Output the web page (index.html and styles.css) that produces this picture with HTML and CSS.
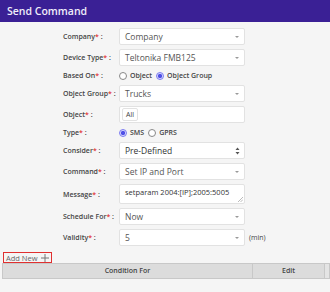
FILE: index.html
```html
<!DOCTYPE html>
<html lang="en">
<head>
  <meta charset="UTF-8">
  <meta name="viewport" content="width=device-width, initial-scale=1.0">
  <title>Send Command</title>
  <link rel="stylesheet" href="styles.css">
</head>
<body>
  <!-- Заголовок -->
  <div class="panel-header">Send Command</div>

  <!-- Форма команды -->
  <div class="command-form">
    <div class="form-label">Company<span class="req">*</span> :</div>
    <div class="field select"><span>Company</span><i class="caret"></i></div>
    <div></div>

    <div class="form-label">Device Type<span class="req">*</span> :</div>
    <div class="field select"><span>Teltonika FMB125</span><i class="caret"></i></div>
    <div></div>

    <div class="form-label short">Based On<span class="req">*</span> :</div>
    <div class="radio-row short">
      <span class="radio"></span><span class="radio-text">Object</span>
      <span class="radio checked"></span><span class="radio-text">Object Group</span>
    </div>
    <div></div>

    <div class="form-label">Object Group<span class="req">*</span> :</div>
    <div class="field select"><span>Trucks</span><i class="caret"></i></div>
    <div></div>

    <div class="form-label">Object<span class="req">*</span> :</div>
    <div class="field tags"><span class="tag">All</span></div>
    <div></div>

    <div class="form-label short">Type<span class="req">*</span> :</div>
    <div class="radio-row short">
      <span class="radio checked"></span><span class="radio-text">SMS</span>
      <span class="radio"></span><span class="radio-text">GPRS</span>
    </div>
    <div></div>

    <div class="form-label">Consider<span class="req">*</span> :</div>
    <div class="field select dark">
      <span>Pre-Defined</span>
      <svg class="updown" width="5" height="8" viewBox="0 0 5 8"><path d="M2.5 0.5 L4.5 3 L0.5 3 Z M2.5 7.5 L4.5 5 L0.5 5 Z" fill="#555"/></svg>
    </div>
    <div></div>

    <div class="form-label">Command<span class="req">*</span> :</div>
    <div class="field select"><span>Set IP and Port</span><i class="caret"></i></div>
    <div></div>

    <div class="form-label tall">Message<span class="req">*</span> :</div>
    <div class="field textarea">
      <span>setparam 2004:[IP];2005:5005</span>
      <svg class="grip" width="5" height="5" viewBox="0 0 5 5"><path d="M0 5 L5 0 M2.5 5 L5 2.5" stroke="#aaa" stroke-width="0.8"/></svg>
    </div>
    <div></div>

    <div class="form-label">Schedule For<span class="req">*</span> :</div>
    <div class="field select"><span>Now</span><i class="caret"></i></div>
    <div></div>

    <div class="form-label">Validity<span class="req">*</span> :</div>
    <div class="field select"><span>5</span><i class="caret"></i></div>
    <div class="unit">(min)</div>
  </div>

  <!-- Условия -->
  <div class="add-new">
    <span>Add New</span>
    <svg class="plus" width="8" height="8" viewBox="0 0 8 8"><path d="M4 0 V8 M0 4 H8" stroke="#777" stroke-width="1"/></svg>
  </div>
  <div class="cond-table">
    <div class="cond-head main">Condition For</div>
    <div class="cond-head edit">Edit</div>
    <div class="cond-head tail"></div>
  </div>
</body>
</html>
```

FILE: styles.css
```css
/* Общие стили */
* {
  margin: 0;
  padding: 0;
  box-sizing: border-box;
}
body {
  font-family: "Open Sans", Arial, sans-serif;
  background-color: #f5f5f5;
  color: #555;
  width: 330px;
  height: 292px;
  overflow: hidden;
}
/* Заголовок панели */
.panel-header {
  height: 22px;
  background-color: #3a2095;
  color: #f0eefa;
  font-size: 10.5px;
  font-weight: 600;
  line-height: 23px;
  padding-left: 7px;
}
/* Форма */
.command-form {
  display: grid;
  grid-template-columns: 56px 126px 40px;
  row-gap: 4px;
  padding: 6px 0 0 63px;
  align-items: center;
}
.form-label {
  font-size: 7px;
  font-weight: 600;
  color: #444;
  white-space: nowrap;
}
.req {
  color: #e23a3a;
}
.field {
  height: 17px;
  background-color: #fff;
  border: 1px solid #e2e2e2;
  border-radius: 2px;
  display: flex;
  align-items: center;
  padding-left: 5px;
  font-size: 8.5px;
  color: #555;
  position: relative;
}
.field.dark {
  color: #333;
}
.caret {
  position: absolute;
  right: 5px;
  top: 7px;
  width: 0;
  height: 0;
  border-left: 2px solid transparent;
  border-right: 2px solid transparent;
  border-top: 2px solid #999;
}
.updown {
  position: absolute;
  right: 4px;
  top: 4px;
}
.tags {
  padding-left: 2px;
}
.tag {
  border: 1px solid #e2e2e2;
  border-radius: 2px;
  font-size: 7px;
  color: #444;
  padding: 0 3px;
  line-height: 11px;
}
.textarea {
  height: 20px;
  align-items: flex-start;
  padding-top: 2px;
  color: #333;
  font-size: 7.5px;
}
.grip {
  position: absolute;
  right: 1px;
  bottom: 1px;
}
/* Радиокнопки */
.short {
  height: 11px;
}
.form-label.short {
  line-height: 11px;
}
.radio-row {
  display: flex;
  align-items: center;
  font-size: 7px;
  font-weight: 600;
  color: #444;
}
.radio {
  width: 8px;
  height: 8px;
  border: 1px solid #888;
  border-radius: 50%;
  background-color: #fff;
  margin-right: 3px;
}
.radio.checked {
  border-color: #7b7cf2;
  background: radial-gradient(circle, #4f50e6 0 45%, #d8d8fb 55%);
}
.radio-text {
  margin-right: 4px;
}
.unit {
  font-size: 7px;
  color: #444;
  padding-left: 4px;
}
/* Добавить условие */
.add-new {
  margin: 6px 0 0 3px;
  width: 49px;
  height: 11px;
  border: 1px solid #e03030;
  font-size: 7.5px;
  color: #666;
  display: flex;
  align-items: center;
  gap: 3px;
  padding-left: 2px;
  white-space: nowrap;
}
/* Таблица условий */
.cond-table {
  margin-left: 2px;
  width: 328px;
  display: flex;
  height: 16px;
}
.cond-head {
  background-color: #dcdcdc;
  border: 1px solid #c8c8c8;
  border-left: none;
  font-size: 7px;
  font-weight: 600;
  color: #444;
  text-align: center;
  line-height: 14px;
}
.cond-head.main {
  width: 251px;
  border-left: 1px solid #c8c8c8;
}
.cond-head.edit {
  width: 72px;
}
.cond-head.tail {
  width: 5px;
  background-color: #e4e4e4;
}
```
